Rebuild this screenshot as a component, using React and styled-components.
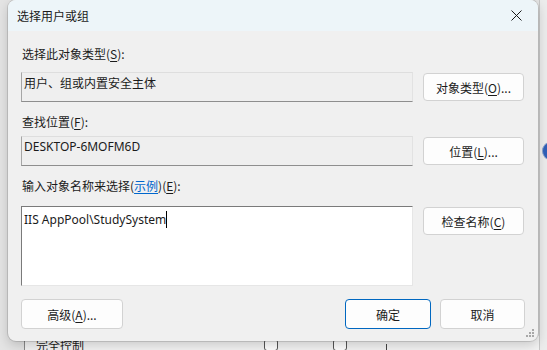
import React from "react";
import styled, { createGlobalStyle } from "styled-components";

const Global = createGlobalStyle`
  html, body {
    margin: 0;
    padding: 0;
    background: #e4e4e4;
    overflow: hidden;
  }
  body {
    font-family: "Noto Sans CJK SC", "Noto Sans", sans-serif;
    font-size: 12px;
    color: #1b1b1b;
  }
`;

const Desktop = styled.div`
  position: relative;
  width: 547px;
  height: 350px;
  overflow: hidden;
  padding-left: 8px;
  box-sizing: border-box;
`;

/* window behind the dialog, only its top edge shows */
const BackWindow = styled.div`
  position: absolute;
  left: 24px;
  top: 336px;
  width: 520px;
  height: 40px;
  background: #f3f3f3;
  border-left: 1px solid #8a8a8a;
`;

const BackText = styled.span`
  position: absolute;
  left: 11px;
  top: 2px;
  font-size: 12px;
  line-height: 14px;
`;

const BackBox = styled.span`
  position: absolute;
  top: 3px;
  left: ${(p) => p.x}px;
  width: 12px;
  height: 10px;
  border: 1px solid #555;
  border-radius: 3px;
  background: #fff;
`;

const BackLine = styled.span`
  position: absolute;
  top: 8px;
  left: ${(p) => p.x}px;
  width: 1px;
  height: 10px;
  background: #444;
`;

const SideWindow = styled.div`
  position: absolute;
  left: 539px;
  top: 0;
  width: 8px;
  height: 350px;
  background: #ececec;
  border-left: 1px solid #c8c8c8;
`;

const SideDot = styled.span`
  position: absolute;
  left: 2px;
  top: 142px;
  width: 14px;
  height: 16px;
  border-radius: 50%;
  background: #2f5fb8;
  border: 1px solid #8aa2cc;
`;

const Dialog = styled.div`
  position: relative;
  width: 530px;
  height: 341px;
  background: #f0f0f0;
  border-radius: 8px;
  box-shadow: 0 0 0 1px rgba(0, 0, 0, 0.12), 0 4px 12px rgba(0, 0, 0, 0.18);
  overflow: hidden;
  display: flex;
  flex-direction: column;
`;

const TitleBar = styled.div`
  height: 31px;
  flex: none;
  display: flex;
  align-items: center;
  justify-content: space-between;
  padding-left: 9px;
  background: #edf5f9;
`;

const Title = styled.span`
  font-size: 12px;
  line-height: 16px;
`;

const CloseButton = styled.div`
  width: 44px;
  height: 31px;
  display: flex;
  align-items: center;
  justify-content: center;
`;

const Body = styled.div`
  flex: 1;
  padding: 15px 13px 12px 13px;
  display: flex;
  flex-direction: column;
`;

const Label = styled.div`
  height: 16px;
  line-height: 16px;
  margin-top: ${(p) => p.gap || 0}px;
  padding-left: 1px;
`;

const Key = styled.span`
  text-decoration: underline;
  text-underline-offset: 2px;
`;

const Link = styled.span`
  color: #0066cc;
  text-decoration: underline;
  text-underline-offset: 2px;
`;

const Row = styled.div`
  display: grid;
  grid-template-columns: 392px 101px;
  column-gap: 10px;
  align-items: ${(p) => (p.top ? "start" : "center")};
  margin-top: ${(p) => p.gap || 0}px;
`;

const Field = styled.div`
  height: ${(p) => p.h}px;
  box-sizing: border-box;
  padding: ${(p) => (p.edit ? "4px 2px" : "2px 2px")};
  line-height: 16px;
  background: ${(p) => (p.edit ? "#ffffff" : "#efefef")};
  border-top: 1px solid ${(p) => (p.edit ? "#7a7a7a" : "#dedede")};
  border-left: 1px solid ${(p) => (p.edit ? "#7a7a7a" : "#a6a6a6")};
  border-right: 1px solid ${(p) => (p.edit ? "#e6e6e6" : "#e2e2e2")};
  border-bottom: 1px solid ${(p) => (p.edit ? "#e6e6e6" : "#8e8e8e")};
  white-space: nowrap;
  font-family: ${(p) =>
    p.latin
      ? '"Noto Sans", "Noto Sans CJK SC", sans-serif'
      : '"Noto Sans CJK SC", sans-serif'};
  font-size: 12px;
`;

const Caret = styled.span`
  display: inline-block;
  width: 1px;
  height: 17px;
  background: #000;
  vertical-align: -4px;
`;

const Button = styled.div`
  height: ${(p) => p.h || 28}px;
  width: ${(p) => (p.w ? `${p.w}px` : "auto")};
  margin-top: ${(p) => p.offset || 0}px;
  box-sizing: border-box;
  display: flex;
  align-items: center;
  justify-content: center;
  background: #fdfdfd;
  border: 1px solid ${(p) => (p.primary ? "#0067c0" : "#d2d2d2")};
  border-radius: 4px;
  font-size: 12px;
  white-space: nowrap;
`;

const Footer = styled.div`
  display: flex;
  align-items: center;
  margin-top: 13px;
  gap: 9px;
`;

const Spacer = styled.div`
  flex: 1;
`;

const Grip = styled.svg`
  position: absolute;
  right: 3px;
  bottom: 3px;
`;

const CloseIcon = () => (
  <svg width="11" height="11" viewBox="0 0 11 11">
    <path d="M0.5 0.5 L10.5 10.5 M10.5 0.5 L0.5 10.5" stroke="#1a1a1a" strokeWidth="1" fill="none" />
  </svg>
);

const App = () => {
  return (
    <>
      <Global />
      <Desktop>
        <BackWindow>
          <BackText>完全控制</BackText>
          <BackBox x={239} />
          <BackBox x={308} />
          <BackLine x={361} />
        </BackWindow>
        <SideWindow>
          <SideDot />
        </SideWindow>

        <Dialog>
          <TitleBar>
            <Title>选择用户或组</Title>
            <CloseButton>
              <CloseIcon />
            </CloseButton>
          </TitleBar>

          <Body>
            <Label>
              选择此对象类型(<Key>S</Key>):
            </Label>
            <Row gap={10}>
              <Field h={30}>用户、组或内置安全主体</Field>
              <Button>
                对象类型(<Key>O</Key>)...
              </Button>
            </Row>

            <Label gap={12}>
              查找位置(<Key>F</Key>):
            </Label>
            <Row gap={6}>
              <Field h={30} latin>
                DESKTOP-6MOFM6D
              </Field>
              <Button>
                位置(<Key>L</Key>)...
              </Button>
            </Row>

            <Label gap={12}>
              输入对象名称来选择(<Link>示例</Link>)(<Key>E</Key>):
            </Label>
            <Row gap={12} top>
              <Field h={80} edit latin>
                IIS AppPool\StudySystem
                <Caret />
              </Field>
              <Button offset={1}>
                检查名称(<Key>C</Key>)
              </Button>
            </Row>

            <Footer>
              <Button w={102} h={30}>
                高级(<Key>A</Key>)...
              </Button>
              <Spacer />
              <Button w={86} h={30} primary>
                确定
              </Button>
              <Button w={85} h={30}>
                取消
              </Button>
            </Footer>
          </Body>

          <Grip width="9" height="9" viewBox="0 0 9 9">
            <rect x="6" y="0" width="2" height="2" fill="#a8a8a8" />
            <rect x="3" y="3" width="2" height="2" fill="#a8a8a8" />
            <rect x="6" y="3" width="2" height="2" fill="#a8a8a8" />
            <rect x="0" y="6" width="2" height="2" fill="#a8a8a8" />
            <rect x="3" y="6" width="2" height="2" fill="#a8a8a8" />
            <rect x="6" y="6" width="2" height="2" fill="#a8a8a8" />
          </Grip>
        </Dialog>
      </Desktop>
    </>
  );
};

export default App;
